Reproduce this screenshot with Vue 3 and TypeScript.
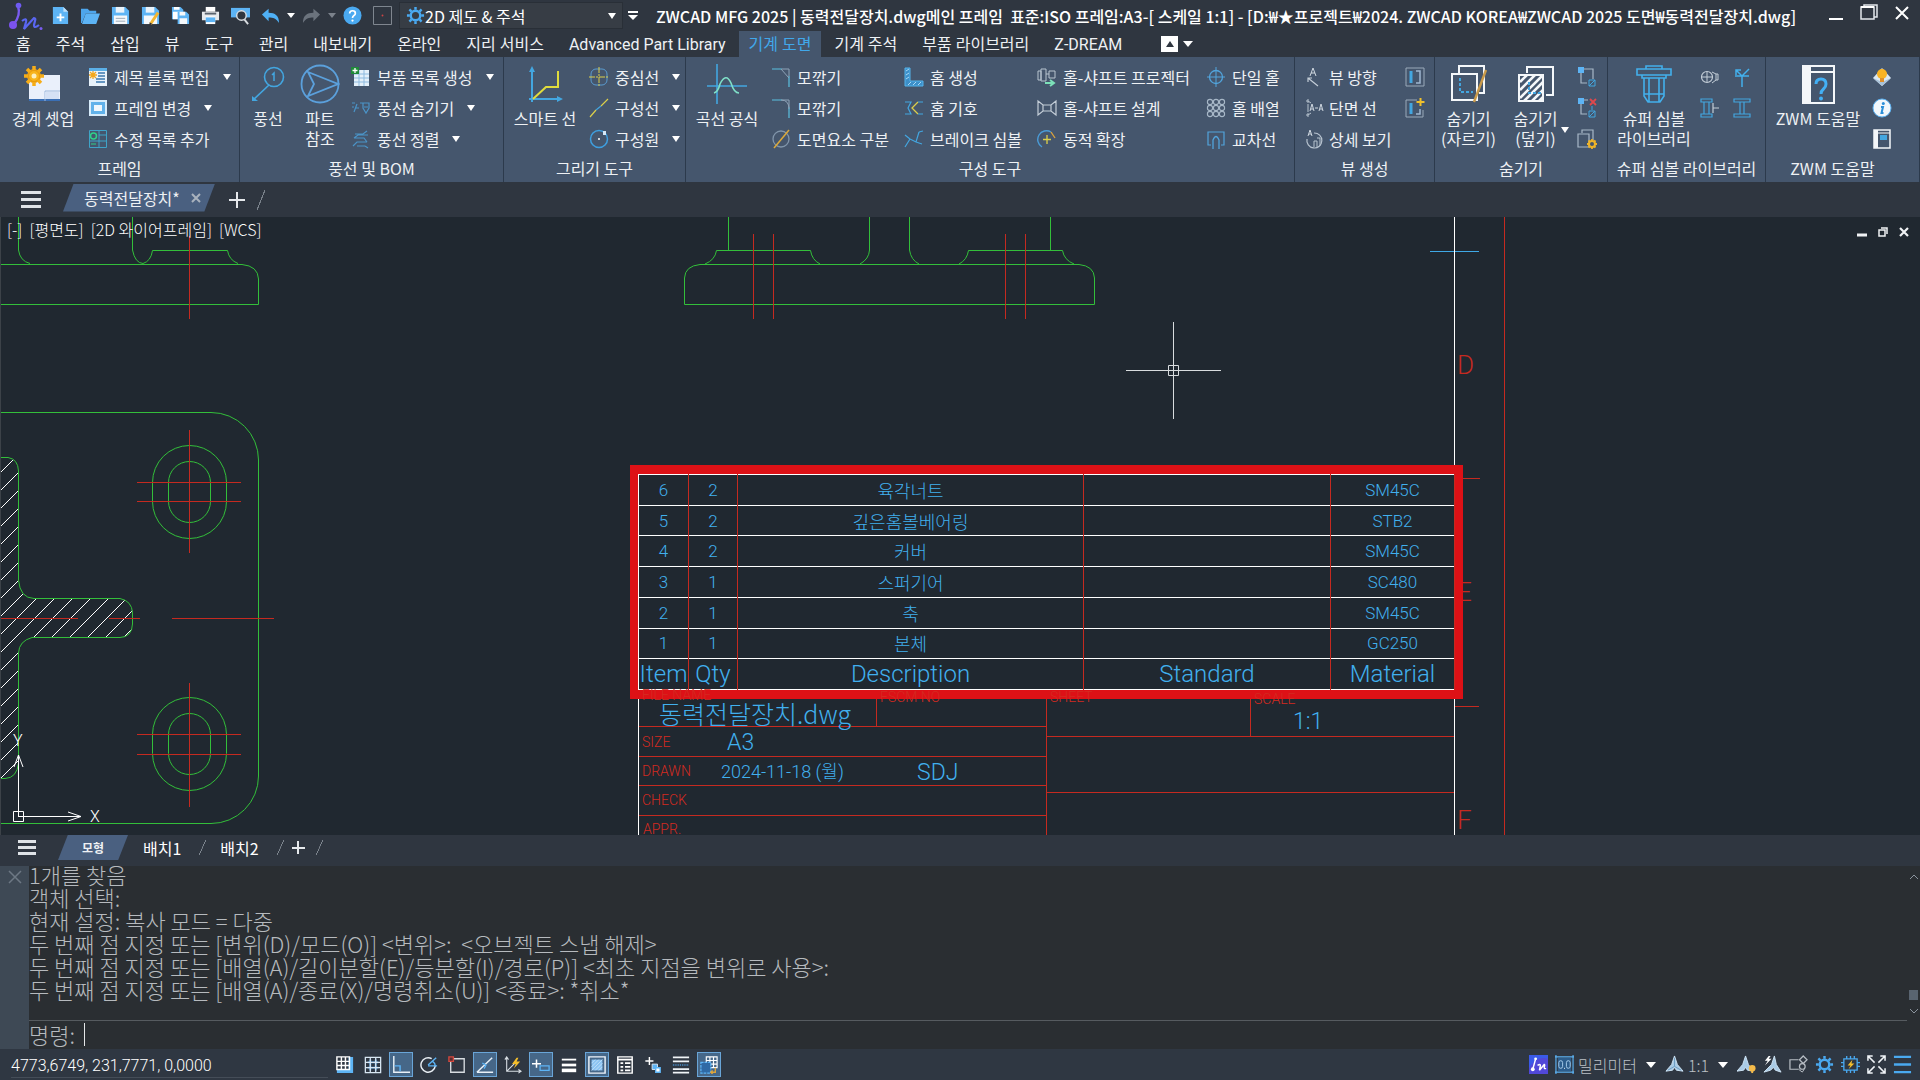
<script setup lang="ts">
import { ref } from 'vue'

interface Tool { icon: string; label?: string; caret?: boolean }
interface Big { icon: string; lines: string[]; caret?: boolean }
interface Group { id: string; title: string; bigs: Big[]; cols: Tool[][] }

const icons: Record<string, string> = {
  logo: '<path d="M6 23Q13 14 10 5" stroke="#7a5cf0" stroke-width="2.400"/><circle cx="10.500" cy="4.500" r="2.800" fill="#6f5bf2"/><circle cx="5" cy="24" r="4" fill="#7b52ee"/><path d="M14 20q5-4 4 1l-2 7 10-11q2 0 1 3l-1 4q0 4 5 0" stroke="#5a66f0" stroke-width="2.200"/><circle cx="33" cy="27.500" r="1.500" fill="#7a5cf0"/>',
  fileNew: '<path d="M2 1h11l5 5v13H2z" fill="#5db4f5"/><path d="M13 1v5h5" fill="#bfe0fa"/><path d="M10 8v8M6 12h8" stroke="#fff" stroke-width="2"/>',
  open: '<path d="M0 3h7l2 2h7v3H5L1 18H0z" fill="#4ea6ec"/><path d="M5 8h15l-4 11H1z" fill="#5db4f5"/>',
  save: '<path d="M1 1h14l4 4v14H1z" fill="#5db4f5"/><path d="M5 1h9v6H5z" fill="#e9f3fb"/><path d="M3 10h14v9H3z" fill="#f5f8fb"/><path d="M5 13h10M5 16h10" stroke="#9aa8b5"/>',
  saveAs: '<path d="M1 1h14l4 4v14H1z" fill="#5db4f5"/><path d="M5 1h9v6H5z" fill="#e9f3fb"/><path d="M3 10h14v9H3z" fill="#f5f8fb"/><path d="M10 19l8-12" stroke="#f2b632" stroke-width="3"/><path d="M9 17v3l3-1z" fill="#333"/>',
  saveAll: '<path d="M1 1h9l3 3v10H1z" fill="#5db4f5"/><path d="M3 1h6v3H3zM2 6h7v8H2z" fill="#fff"/><path d="M7 6h9l3 3v10H7z" fill="#5db4f5"/><path d="M9 6h6v4H9zM9 13h8v6H9z" fill="#f5f8fb"/>',
  print: '<path d="M5 1h10v5H5z" fill="#fff"/><path d="M1 6h18v9H1z" fill="#e6e9ec"/><path d="M4 8h12" stroke="#59636e" stroke-width="2"/><path d="M5 11h10v8H5z" fill="#fff"/><path d="M5 12h10v5H5z" fill="#5db4f5"/>',
  preview: '<path d="M0 2h20v10H0z" fill="#5db4f5"/><circle cx="11" cy="10" r="5" fill="#30363f" stroke="#d9dde1" stroke-width="1.500"/><path d="M14 14l4 5" stroke="#d9dde1" stroke-width="2"/>',
  undo: '<path d="M1 9l7-6v4c7 0 11 3 11 11-3-5-6-6-11-6v4z" fill="#4fb0f5"/>',
  redo: '<path d="M19 9l-7-6v4C5 7 1 10 1 18c3-5 6-6 11-6v4z" fill="#6b737d"/>',
  help: '<circle cx="10" cy="10" r="9.500" fill="#4aa9f0"/><path d="M7 8q0-3 3-3t3 2.500q0 1.500-1.500 2.500T10 12.500" stroke="#fff" stroke-width="1.800"/><circle cx="10" cy="15.300" r="1.200" fill="#fff"/>',
  dotBox: '<path d="M.5.500h19v19H.5z" stroke="#868d96"/><circle cx="10" cy="10" r="1" fill="#c44"/>',
  gear: '<circle cx="10" cy="10" r="5" stroke="#4aa9f0" stroke-width="2.500"/><path d="M10 1v3M10 16v3M1 10h3M16 10h3M3.600 3.600l2.200 2.200M14.200 14.200l2.200 2.200M3.600 16.400l2.200-2.200M14.200 5.800l2.200-2.200" stroke="#4aa9f0" stroke-width="2.600"/>',
  border: '<path d="M6 11h31v26H6z" fill="#eaf0fb"/><path d="M6 35h31v2H6z" fill="#3a6fb5"/><path d="M22 37V27h15" stroke="#9db8dc"/><path d="M22 28h14v7H22z" fill="#d5e1f5"/><circle cx="11" cy="12" r="6" fill="#f8b51e" stroke="#e89c10" stroke-width="2"/><path d="M11 2v4M11 18v4M1 12h4M17 12h4M4 5l3 3M15 16l3 3M4 19l3-3M15 8l3-3" stroke="#f6ad18" stroke-width="3.500"/><circle cx="11" cy="12" r="2.500" fill="#fdf0c0"/>',
  titleEdit: '<path d="M1 1h18v18H1z" fill="#e8f2fb"/><path d="M1 1h18v3H1z" fill="#5bb0e8"/><path d="M10 6h7M10 9h7M8 12h9M8 15h9" stroke="#3a78b0" stroke-width="1.500"/><path d="M5 4v8M1 8h8M2 5l6 6M8 5l-6 6" stroke="#f3a81c" stroke-width="1.300"/>',
  frameChange: '<path d="M1 2h18v16H1z" fill="#d8ecfb"/><path d="M3 4h14v12H3z" fill="#62b2ea"/><path d="M6 7h8v6H6z" fill="#f0f7fc"/>',
  listAdd: '<path d="M1.500 1.500h17v17h-17zM11 1v18M1 12h18M11 6h8" stroke="#3fa3c8"/><circle cx="5.500" cy="7" r="3" stroke="#2fd08a" stroke-width="1.500"/><path d="M3 15h5" stroke="#2fd08a"/>',
  balloon: '<circle cx="26" cy="13" r="9.500" stroke="#43a6e0" stroke-width="1.600"/><path d="M21 21L5 36" stroke="#43a6e0" stroke-width="1.600"/><path d="M4 32v5h6z" fill="#43a6e0"/><path d="M24 11l2-2v8" stroke="#43a6e0" stroke-width="1.500"/>',
  partRef: '<circle cx="20" cy="20" r="18.500" stroke="#5ba0dc" stroke-width="1.800"/><path d="M8 8l30 12L8 32l6-12z" stroke="#5ba0dc" stroke-width="1.800"/>',
  bomNew: '<path d="M3 3h15v16H3z" fill="#e4f0fa"/><path d="M3 7h15M3 11h15M3 15h15M8 3v16M13 3v16" stroke="#8ebbe0"/><path d="M0 0h8v7H0z" fill="#1f8a38"/><path d="M4 1v5M1.500 3.500h5" stroke="#fff" stroke-width="1.300"/>',
  balloonHide: '<path d="M1 5h3M1 9h2M6 6l-3 8M4 10h4M9 5h3M12 5h6v5l-3 5-3-5zM13 9h4" stroke="#4b94c8" stroke-width="1.200"/>',
  balloonSort: '<path d="M4 5h8l4-3M17 6H7L3 9M3 9h10l3 4M16 13H6l-4 4M6 17h8M14 17l3 2" stroke="#4b94c8" stroke-width="1.200"/>',
  smart: '<path d="M7 38V6M4 35h32" stroke="#43a6e0" stroke-width="2"/><path d="M4 8l3-6 3 6zM32 32l6 3-6 3z" fill="#43a6e0"/><path d="M8 35l13-12h12V7" stroke="#e0dc3c" stroke-width="2"/>',
  centerLine: '<rect x="2" y="2" width="16" height="16" rx="5" stroke="#5a9bd0"/><path d="M10 0v20M0 10h20" stroke="#dccf4a" stroke-dasharray="6 1 2 1"/>',
  consLine: '<path d="M1 19L7 12M12 8l7-7" stroke="#dccf4a" stroke-width="1.200"/><path d="M7 12l5-4" stroke="#43a6e0" stroke-width="1.200"/>',
  consCircle: '<circle cx="10" cy="10" r="8.500" stroke="#3e9fe0" stroke-width="1.500"/><circle cx="10" cy="10" r="1" fill="#fff"/><path d="M14 2h3v4h-3z" fill="#d5e8f7"/>',
  curve: '<path d="M10 0v40M0 22h40" stroke="#43a6e0" stroke-width="1.600"/><path d="M7 29q4-1 6-9 6-12 11-1 3 10 8 10" stroke="#7fe0c8" stroke-width="1.600"/>',
  chamfer: '<path d="M1 2h10M18 9v11" stroke="#5bc0e0" stroke-width="1.200"/><path d="M11 2h7v7M10 2l8 9" stroke="#8fa3b8"/>',
  fillet: '<path d="M1 2h10M18 9v11" stroke="#5bc0e0" stroke-width="1.200"/><path d="M11 2h7v7M10 2q8 0 8 9" stroke="#8fa3b8"/>',
  divide: '<circle cx="10" cy="10" r="8" stroke="#8195aa" stroke-width="1.300"/><path d="M3 19L18 1" stroke="#dca93a" stroke-width="1.500"/>',
  groove: '<path d="M1 1h5v13h13v5H1z" fill="#3d8fc8" stroke="#55b4ec"/><path d="M2 4l3-2M2 8l3-2M2 12l3-2M4 18l3-3M9 18l3-3M14 18l3-3" stroke="#a8d8f5"/>',
  grooveSym: '<path d="M1 4h6l-3 6 3 6H1" stroke="#43a6e0" stroke-width="1.200"/><path d="M14 4l-6 6 6 6" stroke="#dccf4a" stroke-width="1.300"/><path d="M14 4h5M14 16h5" stroke="#43a6e0"/>',
  brk: '<path d="M1 6l5 4M1 18l5-8 6 3 3-10M12 13l6 2M15 3l4-1" stroke="#43a6e0" stroke-width="1.200"/>',
  shaftProj: '<path d="M1 4h3v9H1zM4 2h5v12H4zM12 4h6v7h-6zM9 7h3" stroke="#b8c4d0"/><path d="M8 16h8M13 13l4 3-4 3" stroke="#7ce0b8" stroke-width="2"/>',
  shaftDesign: '<path d="M1 3v14l5-4h8l5 4V3l-5 4H6zM6 7v6M14 7v6" stroke="#c4ced8" stroke-width="1.200"/>',
  dynamic: '<path d="M5 18a8.500 8.500 0 0 1 9-15" stroke="#4a9cd8" stroke-width="1.400"/><path d="M10 6v9M6 10.500h8" stroke="#dccf4a" stroke-width="1.300"/><path d="M14 3l4 6" stroke="#e0a53a" stroke-width="1.300"/>',
  hole: '<circle cx="10" cy="10" r="6.500" stroke="#52a4dc" stroke-width="1.300"/><path d="M10 0v20M1 10h18" stroke="#52a4dc"/>',
  holes: [4, 10, 16].map(y => [4, 10, 16].map(x => `<circle cx="${x}" cy="${y}" r="2.600" stroke="#a8b8c8" stroke-width="1.100"/>`).join('')).join(''),
  cross: '<path d="M5 16H2V3h16v13h-3" stroke="#52a4dc" stroke-width="1.200"/><path d="M7 20V11q3-7 6 0v9" stroke="#52a4dc" stroke-width="1.300"/>',
  viewDir: '<path d="M5 9L8 1l3 8M6 6h4" stroke="#d0d8e0"/><path d="M3 11l10 8M3 15v-4h4" stroke="#c4ced8" stroke-width="1.200"/>',
  section: '<path d="M3 1v4M3 15v4M1 3h2l3 2M1 17h2l3-2M3 6v8" stroke="#b8c4d0"/><path d="M5 13l2-7 2 7M6 11h2M10 10h3M14 13l2-7 2 7M15 11h2" stroke="#d0d8e0"/>',
  detail: '<path d="M3 7l2-6 2 6M4 5h2" stroke="#d0d8e0"/><path d="M9 4a7.500 7.500 0 1 1-7 6" stroke="#b8c4d0" stroke-width="1.200"/><path d="M9 18v-6h3v6M12 9h3v8" stroke="#b8c4d0"/>',
  viewBox: '<path d="M1 1h18v18H1z" stroke="#9aa9ba"/><path d="M6 4v12" stroke="#43a6e0" stroke-width="3"/><path d="M11 4h4v12h-4" stroke="#9fb6cf" stroke-width="1.500"/>',
  viewBoxAdd: '<path d="M12 2H1v17h17v-7" stroke="#9aa9ba"/><path d="M6 5v11" stroke="#43a6e0" stroke-width="3"/><path d="M11 16h4v-5" stroke="#9fb6cf" stroke-width="1.500"/><path d="M15.500 0v8M11.500 4h8" stroke="#f0c02c" stroke-width="2"/>',
  hideCut: '<path d="M10 10V2h25v27h-5M3 10h25v26H3z" stroke="#f4f7fa" stroke-width="2"/><path d="M11 14v14h13" stroke="#43a6e0" stroke-width="2" stroke-dasharray="3 2"/><path d="M25 38L37 6" stroke="#c99a4a" stroke-width="2.400"/>',
  hideCover: '<path d="M11 9V3h26v28h-7" stroke="#f4f7fa" stroke-width="2"/><path d="M3 11h24v26H3z" stroke="#f4f7fa" stroke-width="2"/><path d="M4 18l7-7M4 26l15-15M4 34l22-22M8 37l19-19M16 37l11-11M23 37l4-4" stroke="#f4f7fa" stroke-width="2.500"/><path d="M13 18v11h12" stroke="#43a6e0" stroke-width="2" stroke-dasharray="3 2"/>',
  hideA: '<path d="M7 2h9v10M4 6v10h6" stroke="#a8b8c8" stroke-width="1.200"/><path d="M1 0h6v6H1z" fill="#5db4f5"/><path d="M12 13h6v6h-6zM12 19l6-6" stroke="#43a6e0"/>',
  hideB: '<path d="M7 2h4M4 6v10h6" stroke="#a8b8c8" stroke-width="1.200"/><path d="M1 0h6v6H1z" fill="#5db4f5"/><path d="M12 13h6v6h-6zM12 19l6-6M15 8v4" stroke="#43a6e0"/><path d="M13 1l6 6M19 1l-6 6" stroke="#e0484c" stroke-width="1.800"/>',
  hideC: '<path d="M5 4V1h11v10M1 5h11v13H1z" stroke="#a8b8c8" stroke-width="1.200" /><circle cx="15" cy="15" r="3" stroke="#f0b428" stroke-width="2"/><path d="M15 10v2M15 18v2M10 15h2M18 15h2M11.500 11.500l1.500 1.500M17 17l1.500 1.500M11.500 18.500L13 17M17 13l1.500-1.500" stroke="#f0b428" stroke-width="1.800"/>',
  bolt: '<path d="M12 2h16v3H12zM3 5h34v6H3zM8 11v3h24v-3M10 14v18l4 6h12l4-6V14M15 14v24M25 14v24M10 30h20" stroke="#43b0ec" stroke-width="1.600"/>',
  nutA: '<circle cx="7" cy="10" r="5.500" stroke="#c4ced8" stroke-width="1.200"/><path d="M1 10h12M7 5v10M12 5l4 2v6l-4 3M16 7h2v6h-2" stroke="#c4ced8"/>',
  nutB: '<path d="M10 20V9L4 3M10 9l7-7M3 9h14M4 8V3h5" stroke="#43b0ec" stroke-width="1.500"/>',
  nutC: '<path d="M1 1h11v3H1zM1 16h11v3H1zM4 4v12M9 4v12" stroke="#43a6e0" stroke-width="1.200"/><path d="M13 5v10M13 10h6" stroke="#c4ced8" stroke-width="1.200"/>',
  nutD: '<path d="M2 1h16v3H2zM2 16h16v3H2zM8 4v12M12 4v12" stroke="#43a6e0" stroke-width="1.200"/>',
  zwmHelp: '<path d="M5 2h31v37H5z" fill="#45566d" stroke="#f4f7fa" stroke-width="2"/><path d="M5 2h8v37H5z" fill="#f4f7fa"/><path d="M6 8h30" stroke="#f4f7fa" stroke-width="2"/><path d="M18 20q0-5 5-5t5 5q0 3-2.500 5T23 30" stroke="#43b0f5" stroke-width="3"/><circle cx="23" cy="34.500" r="2" fill="#43b0f5"/>',
  tip: '<path d="M10 1l9 10-9 8-9-8z" fill="#dce8f2"/><path d="M1 11l9 8 9-8-9 4z" fill="#a9c2d8"/><circle cx="10" cy="7" r="5" fill="#f8b324"/><path d="M8 11h4v4H8z" fill="#e0902a"/>',
  info: '<circle cx="10" cy="10" r="9" fill="#f2f7fb" stroke="#5db4f5"/><path d="M9 9h2l-1.500 6h2" stroke="#2c8fd8" stroke-width="2"/><circle cx="11.300" cy="5.500" r="1.500" fill="#2c8fd8"/>',
  about: '<path d="M2 1h16v18H2z" fill="#45566d" stroke="#f4f7fa" stroke-width="1.500"/><path d="M2 1h4v18H2z" fill="#f4f7fa"/><path d="M3 4h15" stroke="#f4f7fa"/><path d="M8 6h7v5H8z" fill="#43a6e0"/>',
  sGrid: '<path d="M14 1h5v18H1v-4h13z" fill="#5db4f5"/><path d="M1 1h14v14H1zM6 1v14M10.500 1v14M1 6h14M1 10.500h14" stroke="#fff" stroke-width="1.600"/>',
  sSnap: '<path d="M6 4h2v12H6zM12 4h2v12h-2zM4 6h12v2H4zM4 12h12v2H4z" fill="#4f9bdc"/><path d="M1.500 1.500h17v17h-17zM7 2v16M13 2v16M2 7h16M2 13h16" stroke="#d8e6f2" stroke-width="1.400"/>',
  sOrtho: '<path d="M2 0v18h18" stroke="#e8f0f8" stroke-width="1.600"/><path d="M3 11h6v6" stroke="#5db4f5" stroke-width="1.600"/>',
  sPolar: '<path d="M13 3a8 8 0 1 0 4 8" stroke="#e8eef4" stroke-width="1.600"/><path d="M9 10l9-8M9 11h10M14 6q3 2 3 5" stroke="#5db4f5" stroke-width="1.600"/>',
  sOsnap: '<path d="M3 3h15v15H3z" stroke="#d8dce0" stroke-width="1.500"/><path d="M1 1h5v5H1z" fill="#5a2c30" stroke="#d2483e" stroke-width="1.500"/>',
  sTrack: '<path d="M1 18L18 2M1 18h18" stroke="#e8f0f8" stroke-width="1.700"/><path d="M7 8l4 2-2 4" stroke="#5db4f5" stroke-width="1.500"/>',
  sDucs: '<path d="M3 1v16h16M3 17L13 7M1 4l2-3 2 3M16 15l3 2-3 2" stroke="#d8dee4" stroke-width="1.200"/><path d="M14 2l-5 7h4l-2 5 7-8h-4l2-4z" fill="#f5bf2c"/>',
  sDyn: '<path d="M5 4v9M0 8.500h10" stroke="#fff" stroke-width="1.700"/><path d="M9 11h10v5H9z" stroke="#5db4f5" stroke-width="1.400"/>',
  sLwt: '<path d="M2 4h16" stroke="#fff" stroke-width="2"/><path d="M2 10h16" stroke="#fff" stroke-width="3"/><path d="M2 16h16" stroke="#fff" stroke-width="4"/>',
  sTrans: '<path d="M1 1h18v18H1z" stroke="#eef4fa" stroke-width="1.600"/><path d="M4 4h12v12H4z" fill="#8cc4f2"/><path d="M4 8l4-4M4 12l8-8M4 16L16 4M8 16l8-8M12 16l4-4" stroke="#bfe0f8"/>',
  sQp: '<path d="M2 1h16v18H2z" stroke="#fff" stroke-width="1.600"/><path d="M2 4h16" stroke="#fff" stroke-width="2"/><path d="M5 8h3M5 12h3M5 16h3M10 8h6M10 12h6M10 16h6" stroke="#fff" stroke-width="2"/>',
  sCycle: '<path d="M6 1v9M1.500 5.500h9" stroke="#fff" stroke-width="1.600"/><path d="M9 9h6v6H9z" fill="#5db4f5" stroke="#dceaf6"/><path d="M13 13h5v5h-5z" fill="#fff" stroke="#5db4f5" stroke-width="1.500"/>',
  sLines: '<path d="M1 1.500h18M1 6h18M1 14.500h18M1 18.500h18" stroke="#f0f4f8" stroke-width="2"/><path d="M1 10h18" stroke="#4f9bdc" stroke-width="1.500" stroke-dasharray="1 1"/>',
  sAnno: '<path d="M7 1h12v12H7zM11 1v12M15 1v12M7 5h12M7 9h12" stroke="#fff" stroke-width="1.300"/><path d="M1 7h11v12H1z" fill="#2f6aa5" stroke="#5db4f5" stroke-width="1.400" stroke-dasharray="3 1"/><path d="M17 13v5h-5M14 16l-2 2 2 2" stroke="#e0a53a" stroke-width="1.500"/>',
  zw: '<path d="M0 0h20v20H0z" fill="#5148d8"/><path d="M0 14Q8 0 20 4V0H0z" fill="#3a5ae8"/><path d="M4 15L7 4M9 11q3-2 3 0l-1 5 5-6q1 0 0 3 0 2 2 1" stroke="#fff" stroke-width="1.500"/><circle cx="4" cy="15" r="2" fill="#fff"/><circle cx="7" cy="4" r="1.500" fill="#fff"/>',
  units: '<path d="M1 0v20M19 0v20M0 2h20M0 18h20" stroke="#5db4f5" stroke-width="1.200"/><path d="M3 3h14v14H3z" fill="#2c5d8c"/><rect x="4" y="6" width="4" height="8" rx="2" stroke="#a8cdec"/><rect x="12" y="6" width="4" height="8" rx="2" stroke="#a8cdec"/><path d="M9.500 14h1" stroke="#fff"/>',
  anno: '<path d="M10 1l3 9 6 7-7-1-2-3-2 3-7 1 6-7z" fill="#a9cbe6" stroke="#cfe4f4"/><path d="M10 3v9l-7 4M10 12l7 4" stroke="#6d9cc2"/>',
  annoVis: '<path d="M9 1l3 9 5 7-6-1-2-3-2 3-7 1 6-7z" fill="#a9cbe6" stroke="#cfe4f4"/><circle cx="16" cy="14" r="3.500" fill="#f5bb4a"/><path d="M16 16v3" stroke="#f5bb4a" stroke-width="2"/>',
  annoAuto: '<path d="M12 1l2 9 5 8-6-2-2-3-3 3-7 2 8-8z" fill="#a9cbe6" stroke="#cfe4f4"/><path d="M6 1L2 6h3L2 11l7-7H6l2-3z" fill="#fff"/>',
  iso: '<path d="M10 5H1v10h9" stroke="#b8bec5" stroke-width="1.300"/><path d="M15 1l4 4-4 4-4-4z" stroke="#b8bec5" stroke-width="1.300"/><circle cx="14" cy="12" r="3" stroke="#b8bec5" stroke-width="1.300"/><path d="M10 15l4 3 2-3" stroke="#b8bec5"/>',
  hw: '<path d="M3 4h14v12H3zM6 1v3M10 1v3M14 1v3M6 16v3M10 16v3M14 16v3M0 8h3M0 12h3M17 8h3M17 12h3" stroke="#4aa9f0" stroke-width="1.400"/><path d="M12 5l-5 6h3l-2 4 6-6h-3z" fill="#f5bf2c"/>',
  full: '<path d="M1 6V1h5M14 1h5v5M19 14v5h-5M6 19H1v-5M1 1l7 7M19 1l-7 7M19 19l-7-7M1 19l7-7" stroke="#f0f4f8" stroke-width="1.600"/>',
  menu: '<path d="M1 2h18M1 10h18M1 18h18" stroke="#4aa9f0" stroke-width="2.400"/>',
}

const quick: string[] = ['fileNew', 'open', 'save', 'saveAs', 'saveAll', 'print', 'preview']

const tabs: string[] = ['홈', '주석', '삽입', '뷰', '도구', '관리', '내보내기', '온라인', '지리 서비스',
  'Advanced Part Library', '기계 도면', '기계 주석', '부품 라이브러리', 'Z-DREAM']
const activeTab = ref('기계 도면')

const groups: Group[] = [
  {
    id: 'frame', title: '프레임', bigs: [{ icon: 'border', lines: ['경계 셋업'] }],
    cols: [[{ icon: 'titleEdit', label: '제목 블록 편집', caret: true }, { icon: 'frameChange', label: '프레임 변경', caret: true }, { icon: 'listAdd', label: '수정 목록 추가' }]],
  },
  {
    id: 'bom', title: '풍선 및 BOM', bigs: [{ icon: 'balloon', lines: ['풍선'] }, { icon: 'partRef', lines: ['파트', '참조'] }],
    cols: [[{ icon: 'bomNew', label: '부품 목록 생성', caret: true }, { icon: 'balloonHide', label: '풍선 숨기기', caret: true }, { icon: 'balloonSort', label: '풍선 정렬', caret: true }]],
  },
  {
    id: 'draw', title: '그리기 도구', bigs: [{ icon: 'smart', lines: ['스마트 선'] }],
    cols: [[{ icon: 'centerLine', label: '중심선', caret: true }, { icon: 'consLine', label: '구성선', caret: true }, { icon: 'consCircle', label: '구성원', caret: true }]],
  },
  {
    id: 'construct', title: '구성 도구', bigs: [{ icon: 'curve', lines: ['곡선 공식'] }],
    cols: [
      [{ icon: 'chamfer', label: '모깎기' }, { icon: 'fillet', label: '모깎기' }, { icon: 'divide', label: '도면요소 구분' }],
      [{ icon: 'groove', label: '홈 생성' }, { icon: 'grooveSym', label: '홈 기호' }, { icon: 'brk', label: '브레이크 심볼' }],
      [{ icon: 'shaftProj', label: '홀-샤프트 프로젝터' }, { icon: 'shaftDesign', label: '홀-샤프트 설계' }, { icon: 'dynamic', label: '동적 확장' }],
      [{ icon: 'hole', label: '단일 홀' }, { icon: 'holes', label: '홀 배열' }, { icon: 'cross', label: '교차선' }],
    ],
  },
  {
    id: 'view', title: '뷰 생성', bigs: [],
    cols: [
      [{ icon: 'viewDir', label: '뷰 방향' }, { icon: 'section', label: '단면 선' }, { icon: 'detail', label: '상세 보기' }],
      [{ icon: 'viewBox' }, { icon: 'viewBoxAdd' }],
    ],
  },
  {
    id: 'hide', title: '숨기기', bigs: [{ icon: 'hideCut', lines: ['숨기기', '(자르기)'] }, { icon: 'hideCover', lines: ['숨기기', '(덮기)'], caret: true }],
    cols: [[{ icon: 'hideA' }, { icon: 'hideB' }, { icon: 'hideC' }]],
  },
  {
    id: 'symbol', title: '슈퍼 심볼 라이브러리', bigs: [{ icon: 'bolt', lines: ['슈퍼 심볼', '라이브러리'] }],
    cols: [[{ icon: 'nutA' }, { icon: 'nutC' }], [{ icon: 'nutB' }, { icon: 'nutD' }]],
  },
  {
    id: 'help', title: 'ZWM 도움말', bigs: [{ icon: 'zwmHelp', lines: ['ZWM 도움말'] }],
    cols: [[{ icon: 'tip' }, { icon: 'info' }, { icon: 'about' }]],
  },
]

const bom = [
  ['6', '2', '육각너트', '', 'SM45C'],
  ['5', '2', '깊은홈볼베어링', '', 'STB2'],
  ['4', '2', '커버', '', 'SM45C'],
  ['3', '1', '스퍼기어', '', 'SC480'],
  ['2', '1', '축', '', 'SM45C'],
  ['1', '1', '본체', '', 'GC250'],
]
const bomHead = ['Item', 'Qty', 'Description', 'Standard', 'Material']

const hatch = Array.from({ length: 22 }, (_, k) => 256 + k * 18)

const green = [
  'M18.500 0V33Q20 44 30 46.500', 'M132.500 0V33Q135 46 143 46.500Q151 44 152.500 33.500H227.500Q229 43 238 46.500',
  'M0 47.500H242Q258 49 258.500 62V87.500H0',
  'M0 195.500H211A47.500 47.500 0 0 1 258.500 243V559A47.500 47.500 0 0 1 211 606.500H0',
  'M728.500 0V33.500M1050.500 0V33.500M869.500 0V33Q869 42 860 47M909.500 0V33Q911 43 919 47',
  'M705 47Q715 43 716.500 33.500H810.500Q812 43 820 47M959 47Q967 43 968.500 33.500H1062.500Q1064 43 1074 47',
  'M700 47.500H1079Q1094 49 1094.500 61V87.500H684.500V61Q685 49 700 47.500',
]
const slots = [[152.5, 228.5, 74, 93, 37], [168.5, 244.5, 42, 61, 21], [152.5, 480.5, 74, 93, 37], [168.5, 496.5, 42, 61, 21]]
const red = 'M189.500 19V102M189.500 213V336M137 265.500H241M137 284.500H241M189.500 466V590M137 517.500H241M137 537.500H241'
  + 'M0 401.500H78M109 401.500H140M172 401.500H274M753.500 17V102M773.500 17V102M1005.500 17V102M1025.500 17V102'
  + 'M1504.500 0V900M1455 261.500H1480M1455 489.500H1479'
  + 'M638 509.500H1047M638 539.500H1047M638 568.500H1047M638 598.500H1047M876.500 472V509M1046.500 472V900M1250.500 472V519M1047 519.500H1455M1047 575.500H1455'
const labels: [number, number, string][] = [[642, 483, 'FILE NAME'], [880, 485, 'FSCM NO'], [1050, 485, 'SHEET'], [1254, 487, 'SCALE'],
  [642, 530, 'SIZE'], [642, 559, 'DRAWN'], [642, 588, 'CHECK'], [643, 617, 'APPR.']]

const log = [
  '1개를 찾음',
  '객체 선택:',
  '현재 설정: 복사 모드 = 다중',
  '두 번째 점 지정 또는 [변위(D)/모드(O)] <변위>:  <오브젝트 스냅 해제>',
  '두 번째 점 지정 또는 [배열(A)/길이분할(E)/등분할(I)/경로(P)] <최초 지점을 변위로 사용>:',
  '두 번째 점 지정 또는 [배열(A)/종료(X)/명령취소(U)] <종료>: *취소*',
]
const command = ref('')

const toggles = ref([
  { icon: 'sGrid', on: false }, { icon: 'sSnap', on: false }, { icon: 'sOrtho', on: true }, { icon: 'sPolar', on: false },
  { icon: 'sOsnap', on: false }, { icon: 'sTrack', on: true }, { icon: 'sDucs', on: false }, { icon: 'sDyn', on: true },
  { icon: 'sLwt', on: false }, { icon: 'sTrans', on: true }, { icon: 'sQp', on: false }, { icon: 'sCycle', on: false },
  { icon: 'sLines', on: false }, { icon: 'sAnno', on: true },
])
const tail = ['annoVis', 'annoAuto', 'iso', 'gear', 'hw', 'full', 'menu']
</script>

<template>
  <div class="app">
    <header class="titlebar">
      <svg class="logo" viewBox="0 0 36 30" v-html="icons.logo" />
      <div class="quick">
        <button v-for="q in quick" :key="q" :aria-label="q"><svg class="ic" viewBox="0 0 20 20" v-html="icons[q]" /></button>
      </div>
      <button class="undo" aria-label="undo"><svg class="ic" viewBox="0 0 20 20" v-html="icons.undo" /><i class="caret" /></button>
      <button class="undo dim" aria-label="redo"><svg class="ic" viewBox="0 0 20 20" v-html="icons.redo" /><i class="caret" /></button>
      <button aria-label="help"><svg class="ic" viewBox="0 0 20 20" v-html="icons.help" /></button>
      <button class="dot" aria-label="record"><svg class="ic" viewBox="0 0 20 20" v-html="icons.dotBox" /></button>
      <label class="workspace">
        <svg class="ic" viewBox="0 0 20 20" v-html="icons.gear" />
        <select aria-label="workspace"><option>2D 제도 &amp; 주석</option></select>
        <i class="caret" />
      </label>
      <button class="more" aria-label="customize"><i class="bar" /><i class="caret" /></button>
      <h1>ZWCAD MFG 2025 | 동력전달장치.dwg메인 프레임&nbsp; 표준:ISO 프레임:A3-[ 스케일 1:1] - [D:₩★프로젝트₩2024. ZWCAD KOREA₩ZWCAD 2025 도면₩동력전달장치.dwg]</h1>
      <div class="winctl">
        <button aria-label="minimize"><svg viewBox="0 0 18 18"><path d="M2 15h14" stroke="#fff" stroke-width="2" /></svg></button>
        <button aria-label="restore"><svg viewBox="0 0 18 18"><path d="M1 3h13v12H1zM4 3V1h13v12h-3" stroke="#e4e8ec" stroke-width="1.500" /><path d="M1 3h13" stroke="#fff" stroke-width="2" /></svg></button>
        <button aria-label="close"><svg viewBox="0 0 18 18"><path d="M3 3l12 12M15 3L3 15" stroke="#fff" stroke-width="2" /></svg></button>
      </div>
    </header>

    <nav class="tabs">
      <button v-for="t in tabs" :key="t" :class="{ active: t === activeTab }" @click="activeTab = t">{{ t }}</button>
      <button class="collapse" aria-label="collapse ribbon"><i class="up" /></button>
      <i class="caret large" />
    </nav>

    <section class="ribbon">
      <div v-for="g in groups" :key="g.id" class="group" :class="g.id">
        <div class="tools">
          <button v-for="b in g.bigs" :key="b.icon" class="big">
            <svg class="ic-big" viewBox="0 0 40 40" v-html="icons[b.icon]" />
            <span v-for="l in b.lines" :key="l">{{ l }}</span>
            <i v-if="b.caret" class="caret" />
          </button>
          <div v-for="(c, i) in g.cols" :key="i" class="col">
            <button v-for="t in c" :key="t.icon" class="row" :aria-label="t.label ?? t.icon">
              <svg class="ic" viewBox="0 0 20 20" v-html="icons[t.icon]" />
              <span v-if="t.label">{{ t.label }}</span>
              <i v-if="t.caret" class="caret" />
            </button>
          </div>
        </div>
        <div class="title">{{ g.title }}</div>
      </div>
    </section>

    <div class="docs">
      <button class="burger" aria-label="documents"><i /><i /><i /></button>
      <div class="doc">동력전달장치*<button aria-label="close document"><svg viewBox="0 0 10 10"><path d="M1 1l8 8M9 1L1 9" stroke="#a9b2bd" stroke-width="2" /></svg></button></div>
      <button class="plus" aria-label="new document" />
      <i class="slash" />
    </div>

    <main class="canvas">
      <svg class="drawing">
        <defs>
          <clipPath id="ribs"><path d="M1 240.500H8Q18 242 18.500 254V363Q20 381 34 381.500H120Q132 384 132.500 396V407Q132 420 120 420.500H32Q19 424 18.500 436V546Q17 561 5 561.500H1z" /></clipPath>
        </defs>
        <g clip-path="url(#ribs)" stroke="#fff">
          <path v-for="s in hatch" :key="s" :d="`M0 ${s}L140 ${s - 140}`" />
        </g>
        <g stroke="#33bf3a">
          <path d="M0 240.500H8Q18 242 18.500 254V363Q20 381 34 381.500H120Q132 384 132.500 396V407Q132 420 120 420.500H32Q19 424 18.500 436V546Q17 561 5 561.500H0" />
          <path v-for="d in green" :key="d" :d="d" />
          <rect v-for="(s, i) in slots" :key="i" :x="s[0]" :y="s[1]" :width="s[2]" :height="s[3]" :rx="s[4]" />
        </g>
        <path :d="red" stroke="#c52a20" />
        <path d="M1430 34.500H1479" stroke="#3fa9e6" />
        <path d="M638.500 471V900M1454.500 0V900" stroke="#fff" />
        <path d="M13.500 594.500h10v10h-10zM18.500 600V538M18.500 599.500H81M68 595l13 4.500-13 4.500M14 550l4.500-12 4.500 12" stroke="#fff" />
        <path d="M1173.500 105V202M1126 153.500H1221M1168.500 148.500h10v10h-10z" stroke="#d8dcde" />
        <g class="wcs"><text x="13" y="529">Y</text><text x="90" y="605">X</text></g>
        <g class="zone"><text x="1457" y="157">D</text><text x="1457" y="384">E</text><text x="1457" y="612">F</text></g>
        <g class="vals">
          <text x="659" y="507">동력전달장치.dwg</text>
          <text x="727" y="533">A3</text>
          <text x="917" y="563">SDJ</text>
          <text x="1293" y="512">1:1</text>
          <text class="narrow" x="721" y="561">2024-11-18 (월)</text>
        </g>
      </svg>
      <div class="viewlabel"><button>[-]</button><button>[평면도]</button><button>[2D 와이어프레임]</button><button>[WCS]</button></div>
      <div class="mdi">
        <button aria-label="minimize view"><svg viewBox="0 0 10 10"><path d="M0 8h10" stroke="#f0f2f4" stroke-width="3" /></svg></button>
        <button aria-label="restore view"><svg viewBox="0 0 10 10"><path d="M1 3h6v6H1zM3 1h6v6" stroke="#f0f2f4" stroke-width="1.500" /></svg></button>
        <button aria-label="close view"><svg viewBox="0 0 10 10"><path d="M1 1l8 8M9 1L1 9" stroke="#f0f2f4" stroke-width="2.200" /></svg></button>
      </div>
      <div class="highlight">
        <table>
          <colgroup><col class="c1"><col class="c2"><col class="c3"><col class="c4"><col class="c5"></colgroup>
          <tbody>
            <tr v-for="r in bom" :key="r[0]"><td v-for="(c, i) in r" :key="i" :class="{ ko: i === 2 }">{{ c }}</td></tr>
            <tr><th v-for="h in bomHead" :key="h" scope="col">{{ h }}</th></tr>
          </tbody>
        </table>
      </div>
      <svg class="drawing labels"><text v-for="l in labels" :key="l[2]" :x="l[0]" :y="l[1]">{{ l[2] }}</text></svg>
    </main>

    <div class="layouts">
      <button class="burger small" aria-label="layouts"><i /><i /><i /></button>
      <button class="model">모형</button>
      <button class="sheet">배치1</button><i class="slash" />
      <button class="sheet">배치2</button><i class="slash" />
      <button class="plus small" aria-label="new layout" /><i class="slash" />
    </div>

    <section class="console">
      <div class="grip"><button aria-label="close console"><svg viewBox="0 0 14 14"><path d="M1 1l12 12M13 1L1 13" stroke="#6d7884" stroke-width="1.500" /></svg></button></div>
      <div class="body">
        <div class="log"><p v-for="l in log" :key="l">{{ l }}</p></div>
        <label class="prompt"><span>명령:</span><i class="cursor" /><input v-model="command" type="text"></label>
      </div>
      <div class="scroll">
        <svg viewBox="0 0 10 6"><path d="M1 5l4-4 4 4" stroke="#8b949e" /></svg>
        <i />
        <svg viewBox="0 0 10 6"><path d="M1 1l4 4 4-4" stroke="#8b949e" /></svg>
      </div>
    </section>

    <footer class="status">
      <div class="coords">4773,6749, 231,7771, 0,0000</div>
      <div class="toggles">
        <button v-for="t in toggles" :key="t.icon" :class="{ on: t.on }" :aria-pressed="t.on" :aria-label="t.icon" @click="t.on = !t.on">
          <svg viewBox="0 0 20 20" v-html="icons[t.icon]" />
        </button>
      </div>
      <div class="right">
        <svg class="ic" viewBox="0 0 20 20" v-html="icons.zw" />
        <button class="unit"><svg class="ic" viewBox="0 0 20 20" v-html="icons.units" />밀리미터<i class="caret large" /></button>
        <button class="unit"><svg class="ic" viewBox="0 0 20 20" v-html="icons.anno" />1:1<i class="caret large" /></button>
        <button v-for="t in tail" :key="t" :aria-label="t"><svg class="ic" viewBox="0 0 20 20" v-html="icons[t]" /></button>
      </div>
    </footer>
  </div>
</template>

<style>
body { margin: 0; background: #2f3640; }
</style>

<style scoped>
* { box-sizing: border-box; }
.app {
  display: flex; flex-direction: column; min-height: 100vh; overflow: hidden;
  font: 16px/20px "Noto Sans CJK KR", "Noto Sans", sans-serif; color: #eef1f4; background: #2f3640;
}
button { font: inherit; color: inherit; background: none; border: 0; padding: 0; margin: 0; display: flex; align-items: center; white-space: nowrap; }
svg { fill: none; display: block; flex: none; }
.ic { width: 20px; height: 20px; }
.caret { flex: none; width: 0; height: 0; border: 4px solid transparent; border-top: 6px solid #fff; border-bottom: 0; }
.caret.large { border-width: 6px 5px 0; }

.titlebar { display: flex; align-items: center; height: 31px; padding-left: 8px; }
.logo { width: 36px; height: 30px; margin-right: 7px; }
.titlebar .ic { width: 19px; height: 19px; }
.quick { display: flex; gap: 11px; margin-right: 11px; }
.undo { gap: 7px; margin-right: 7px; }
.undo.dim .caret { border-top-color: #7b828b; }
.undo .caret { border-width: 5px 4px 0; }
.dot { margin: 0 7px 0 11px; }
.workspace { position: relative; display: flex; align-items: center; width: 224px; height: 27px; padding: 0 6px; background: #373d45; border: 1px solid #292f37; }
.workspace select { flex: 1; appearance: none; background: none; border: 0; outline: 0; color: #fff; font: inherit; padding: 0; }
.more { flex-direction: column; gap: 2px; margin: 0 18px 0 5px; }
.more .bar { width: 10px; height: 2px; background: #fff; }
.more .caret { border-width: 5px 5px 0; }
h1 { flex: 1; margin: 0; font-size: 16px; font-weight: 500; line-height: 24px; color: #fff; white-space: nowrap; }
.winctl { display: flex; gap: 15px; padding: 0 9px 5px 0; }
.winctl svg { width: 18px; height: 18px; }

.tabs { display: flex; align-items: stretch; height: 26px; gap: 1px; padding-left: 4px; font-family: Roboto, "Noto Sans CJK KR", sans-serif; }
.tabs button { padding: 2px 12px 0; line-height: 24px; }
.tabs .active { background: #45566d; color: #41a8ea; padding: 2px 10px 0; }
.tabs .collapse { align-self: center; width: 17px; height: 16px; margin: 0 4px 0 26px; padding: 0; justify-content: center; background: #fff; }
.up { border: 4px solid transparent; border-top: 0; border-bottom: 6px solid #2f3640; }
.tabs > .caret { align-self: center; }

.ribbon { display: flex; height: 125px; background: #45566d; }
.group { display: flex; flex-direction: column; flex: none; border-right: 1px solid #2c3a4c; }
.tools { display: flex; height: 98px; padding-top: 4px; }
.title { line-height: 26px; text-align: center; white-space: nowrap; }
.big { position: relative; flex-direction: column; padding-top: 3px; }
.ic-big { width: 40px; height: 40px; margin-bottom: 4px; }
.row { height: 31px; gap: 6px; }
.row .caret { margin-left: 7px; }
.frame { width: 240px; } .frame .big { width: 86px; margin-right: 2px; }
.bom { width: 264px; } .bom .big { width: 56px; } .bom .big + .big { width: 48px; margin-right: 7px; }
.draw { width: 182px; } .draw .big { width: 82px; margin-right: 3px; }
.construct { width: 609px; } .construct .big { width: 82px; margin-right: 3px; }
.construct .col { width: 133px; } .construct .col:nth-child(4) { width: 169px; } .construct .col:last-child { width: auto; }
.view { width: 140px; } .view .tools { padding-left: 10px; } .view .col { flex: none; width: 100px; } .view .col:last-child { width: auto; } .view .row { gap: 4px; }
.hide { width: 173px; } .hide .big { width: 67px; } .hide .big + .big { margin-right: 8px; } .hide .big .caret { position: absolute; right: 0; top: 66px; }
.symbol { width: 158px; } .symbol .big { width: 92px; } .symbol .col { width: 32px; }
.help { flex: 1; } .help .big { width: 104px; margin-right: 2px; } .help .title { padding-right: 20px; }

.docs { display: flex; align-items: center; height: 35px; padding-left: 21px; }
.burger { flex-direction: column; gap: 4px; }
.burger i { width: 20px; height: 3px; background: #dfe3e7; }
.burger.small { gap: 3px; }
.burger.small i { width: 18px; }
.doc { display: flex; align-items: center; gap: 11px; height: 28px; width: 152px; margin: 0 14px 4px 22px; padding: 0 0 0 21px; white-space: nowrap; background: #4a6080; clip-path: polygon(7% 0, 100% 0, 93% 100%, 0 100%); }
.doc svg { width: 10px; height: 10px; }
.plus { width: 16px; height: 16px; background: linear-gradient(#e6e9ec, #e6e9ec) center / 100% 2px no-repeat, linear-gradient(#e6e9ec, #e6e9ec) center / 2px 100% no-repeat; }
.plus.small { width: 13px; height: 13px; }
.slash { width: 8px; height: 20px; margin-left: 12px; background: linear-gradient(to bottom right, transparent 46%, #7c848d 47%, #7c848d 53%, transparent 54%); }

.canvas { position: relative; flex: 1 1 618px; overflow: hidden; background: #202830; border-left: 1px solid #3c4248; }
.drawing { position: absolute; top: 0; left: -1px; width: 100%; height: 100%; }
.drawing text { font-family: Roboto, "Noto Sans CJK KR", sans-serif; font-weight: 300; }
.wcs text { font-size: 16px; fill: #fff; }
.zone text { font-size: 26px; fill: #c52a20; }
.vals text { font-size: 23px; fill: #41b0ee; }
.vals text:first-child { font-family: "Noto Sans CJK KR", sans-serif; font-size: 25px; }
.vals .narrow { font-family: "Liberation Sans Narrow", Roboto, "Noto Sans CJK KR", sans-serif; font-size: 18px; }
.labels text { font-size: 14px; fill: #d32a20; }
.labels { pointer-events: none; }
.viewlabel { position: absolute; top: 0; left: 6px; display: flex; gap: 6px; font-size: 16px; line-height: 25px; font-weight: 300; color: #fff; }
.viewlabel button { word-spacing: normal; padding-right: 1px; }
.mdi { position: absolute; top: 10px; right: 11px; display: flex; gap: 11px; }
.mdi svg { width: 10px; height: 10px; }
.highlight { position: absolute; left: 629px; top: 248px; width: 833px; border: 8px solid #dd1116; border-top-width: 9px; border-bottom-width: 9px; }
table { width: 817px; height: 216px; table-layout: fixed; border-collapse: collapse; background: #202830; color: #41b0ee; font: 300 17px/20px Roboto, "Noto Sans CJK KR", sans-serif; border: 1px solid #fff; }
td, th { padding: 0; height: 30px; text-align: center; font-weight: 300; border-right: 1px solid #c52a20; }
tr { border-bottom: 1px solid #fff; }
th { font-size: 24px; line-height: 24px; white-space: nowrap; }
.ko { font: 300 18px/20px "Noto Sans CJK KR", sans-serif; }
.c1 { width: 50px; } .c2 { width: 49px; } .c3 { width: 346px; } .c4 { width: 247px; } .c5 { width: 124px; }

.layouts { display: flex; align-items: center; height: 31px; padding: 0 0 6px 18px; }
.model { width: 70px; height: 25px; margin: 0 15px 0 22px; justify-content: center; font-size: 12px; font-weight: 700; background: #4a6080; clip-path: polygon(14% 0, 100% 0, 86% 100%, 0 100%); }
.sheet { color: #fff; }
.layouts .slash { height: 15px; width: 7px; margin: 0 14px 0 18px; }
.layouts .slash:nth-of-type(2) { margin-right: 8px; }
.layouts .plus + .slash { margin-left: 11px; }

.console { display: flex; height: 183px; background: #2a2e32; color: #b6babe; font-size: 22px; font-weight: 300; line-height: 23px; }
.grip { width: 29px; background: #3e4955; padding: 4px 0 0 8px; }
.grip svg { width: 14px; height: 14px; }
.body { flex: 1; display: flex; flex-direction: column; }
.log { flex: 1; margin-top: -3px; }
.log p { margin: 0; white-space: pre; }
.prompt { display: flex; align-items: center; height: 29px; padding-bottom: 2px; border-top: 1px solid #565b60; }
.cursor { width: 1px; height: 23px; margin-left: 9px; background: #e4e6e8; }
.prompt input { flex: 1; background: none; border: 0; outline: 0; color: inherit; font: inherit; height: 24px; }
.scroll { display: flex; flex-direction: column; align-items: center; width: 13px; padding: 8px 0 35px; }
.scroll svg { width: 10px; height: 6px; }
.scroll i { width: 9px; height: 10px; margin: auto 0 8px; background: #596470; }

.status { display: flex; align-items: center; height: 31px; padding: 0 8px 0 11px; background: #2f3742; }
.coords { align-self: flex-end; width: 317px; height: 25px; font: 300 16px/26px Roboto, sans-serif; color: #fff; border-bottom: 1px solid #454d58; margin-bottom: 2px; }
.toggles { display: flex; gap: 4px; margin-left: 5px; }
.toggles button { width: 24px; height: 25px; justify-content: center; border: 1px solid transparent; }
.toggles .on { background: #466788; border-color: #69a5d8; }
.toggles svg { width: 18px; height: 18px; }
.right { display: flex; align-items: center; gap: 7px; margin-left: auto; }
.right .ic { width: 19px; height: 19px; }
.unit { gap: 4px; font-weight: 300; color: #bcc1c6; }
.unit .caret { margin: 0 2px 0 5px; }
</style>
